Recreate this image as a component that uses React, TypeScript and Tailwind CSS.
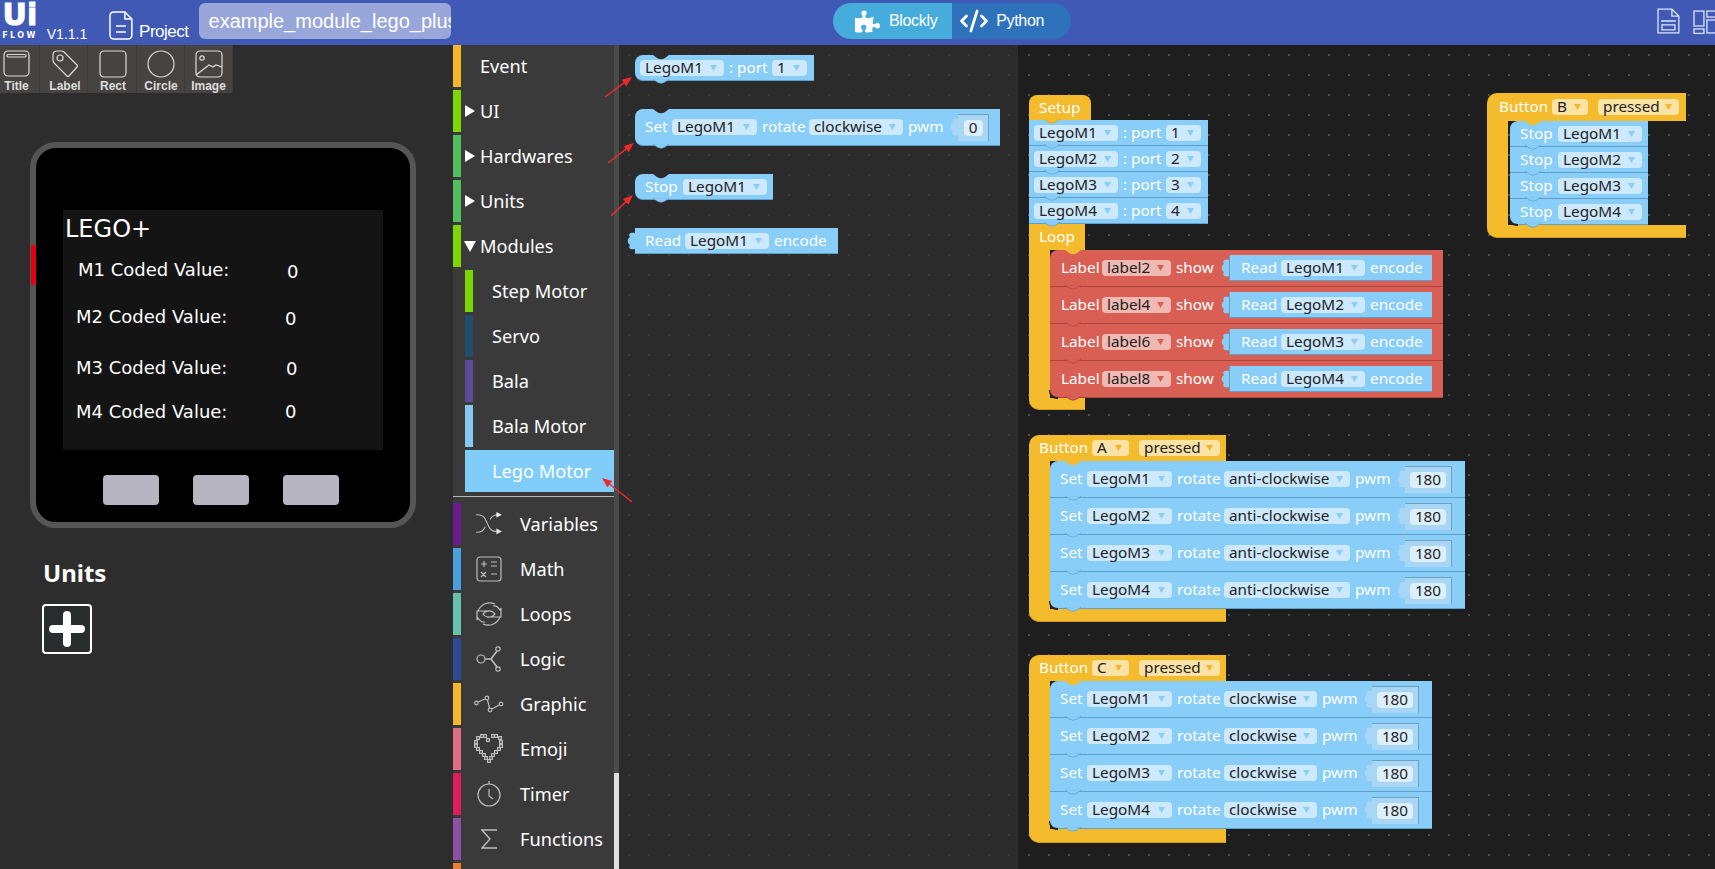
import React from 'react';
import { CodeXml } from 'lucide-react';
import { FaPuzzlePiece } from 'react-icons/fa';

type Tone = 'blue' | 'red' | 'yellow';

const toneStyles: Record<Tone, { body: string; pill: string; tri: string; fill: string; edge: string }> = {
  blue: { body: 'bg-[#89cdf9] border-[#5f9fca]', pill: 'bg-[#cde9fe]', tri: 'text-[#89cdf9]', fill: '#89cdf9', edge: '#5f9fca' },
  red: { body: 'bg-[#d95f54] border-[#a8463e]', pill: 'bg-[#f0b9b3]', tri: 'text-[#d95f54]', fill: '#d95f54', edge: '#a8463e' },
  yellow: { body: 'bg-[#f4bb2c] border-[#d29c1c]', pill: 'bg-[#fbe2a5]', tri: 'text-[#f4b52b]', fill: '#f4bb2c', edge: '#d29c1c' },
};

const Pill = ({ text, w, tone = 'blue' }: { text: string; w: string; tone?: Tone }) => (
  <span className={`flex h-[16px] shrink-0 items-center justify-between rounded-[4px] pl-[5px] pr-[7px] text-[15.3px] leading-none text-[#222] ${w} ${toneStyles[tone].pill}`}>
    <span>{text}</span>
    <svg width="7" height="6" viewBox="0 0 7 6" className={toneStyles[tone].tri}>
      <path d="M0 0h7L3.5 6z" fill="currentColor" />
    </svg>
  </span>
);

const Txt = ({ children, w }: { children: React.ReactNode; w: string }) => (
  <span className={`shrink-0 whitespace-nowrap text-[15.3px] leading-none text-white ${w}`}>{children}</span>
);

const Tab = ({ color, edge }: { color: string; edge?: string }) => (
  <svg width="8" height="18" viewBox="0 0 8 18" className="shrink-0">
    <path d="M8 1C3 0 1 2 3 5 0 7 0 11 3 13 1 16 3 18 8 17z" fill={color} stroke={edge ?? 'none'} strokeWidth="0.6" />
  </svg>
);

// the little puzzle edges at the top and bottom of a statement block
const Notch = ({ tone, hole, left = 'left-[15px]' }: { tone: Tone; hole?: string; left?: string }) => (
  <>
    {hole && (
      <svg width="16" height="5" viewBox="0 0 16 5" className={`absolute top-0 ${left}`}>
        <path d="M0 0l4 3q4 2.5 8 0l4-3z" fill={hole} />
      </svg>
    )}
    <svg width="16" height="6" viewBox="0 0 16 6" className={`absolute -bottom-[5px] z-10 ${left}`}>
      <path d="M0 0l4 3q4 2.5 8 0l4-3z" fill={toneStyles[tone].fill} stroke={toneStyles[tone].edge} strokeWidth="0.7" />
      <path d="M1 0h14" stroke={toneStyles[tone].fill} strokeWidth="1.5" />
    </svg>
  </>
);

const Block = ({
  tone = 'blue',
  hole,
  className,
  children,
  last,
  left,
}: {
  tone?: Tone;
  hole?: string;
  className: string;
  children: React.ReactNode;
  last?: boolean;
  left?: string;
}) => (
  <div className={`relative box-border flex shrink-0 items-center border-b ${toneStyles[tone].body} ${className}`}>
    {children}
    <Notch tone={tone} hole={hole} left={left} />
    {last && <div className="absolute bottom-[-2px] left-[-1px] h-[9px] w-[9px] rounded-bl-[8px] border-b-2 border-l border-[#222]" />}
  </div>
);

const Socket = ({ value, pill, socket }: { value: string; pill: string; socket: string }) => (
  <span className="flex shrink-0 items-center">
    <Tab color="#a9d6f4" />
    <span className={`flex h-[27px] items-center justify-center border-r border-t border-[#6d9fbf] bg-[#a9d6f4] ${socket}`}>
      <span className={`flex h-[16px] items-center justify-center rounded-[4px] bg-[#dceffd] text-[15.3px] leading-none text-[#222] ${pill}`}>{value}</span>
    </span>
  </span>
);

const ReadBlock = ({ motor }: { motor: string }) => (
  <span className="flex shrink-0 items-center">
    <Tab color="#89cdf9" />
    <span className="box-border flex h-[26px] w-[203px] items-center gap-[5px] border-b border-l border-[#5f9fca] bg-[#89cdf9] pl-[11px]">
      <Txt w="w-[35px]">Read</Txt>
      <Pill text={motor} w="w-[84px]" />
      <Txt w="w-[52px]">encode</Txt>
    </span>
  </span>
);

const SetRow = ({ motor, dir, pillW, rowW, first, last }: { motor: string; dir: string; pillW: string; rowW: string; first?: boolean; last?: boolean }) => (
  <Block hole={first ? '#f4bb2c' : undefined} className={`h-[37px] pl-[10px] ${rowW} ${first ? 'rounded-tl-[8px]' : ''} ${last ? 'rounded-bl-[8px]' : ''}`} last={last}>
    <span className="flex items-center gap-[5px]">
      <Txt w="w-[22px]">Set</Txt>
      <Pill text={motor} w="w-[85px]" />
      <Txt w="w-[42px]">rotate</Txt>
      <Pill text={dir} w={pillW} />
      <Txt w="w-[34px]">pwm</Txt>
    </span>
    <span className="ml-[8px]">
      <Socket value="180" pill="w-[36px]" socket="w-[47px]" />
    </span>
  </Block>
);

const CBlock = ({ header, bottomW, bottomH, className, children }: { header: React.ReactNode; bottomW: string; bottomH: string; className?: string; children: React.ReactNode }) => (
  <div className={`flex flex-col ${className ?? ''}`}>
    {header}
    <div className="flex">
      <div className="w-[21px] bg-[#f4bb2c]" />
      <div className="flex flex-col">{children}</div>
    </div>
    <div className={`rounded-bl-[10px] border-b border-[#d29c1c] bg-[#f4bb2c] ${bottomW} ${bottomH}`} />
  </div>
);

const ButtonHeader = ({ letter, pad }: { letter: string; pad: string }) => (
  <div className={`flex h-[26px] w-[197px] items-center rounded-tl-[10px] bg-[#f4bb2c] ${pad}`}>
    <Txt w="w-[48px]">Button</Txt>
    <span className="ml-[5px]"><Pill text={letter} tone="yellow" w="w-[37px]" /></span>
    <span className="ml-[10px]"><Pill text="pressed" tone="yellow" w="w-[81px]" /></span>
  </div>
);

const PortRow = ({ motor, port, hole, className, notchLeft }: { motor: string; port: string; hole?: string; className?: string; notchLeft?: string }) => (
  <Block hole={hole} left={notchLeft} className={`h-[26px] w-[179px] gap-[5px] pl-[5px] ${className ?? ''}`}>
    <Pill text={motor} w="w-[84px]" />
    <Txt w="w-[38px]">: port</Txt>
    <Pill text={port} w="w-[35px]" />
  </Block>
);

const LabelRow = ({ label, motor, first, last }: { label: string; motor: string; first?: boolean; last?: boolean }) => (
  <Block tone="red" hole={first ? '#f4bb2c' : undefined} last={last} className={`h-[37px] w-[393px] pl-[11px] ${first ? 'rounded-tl-[8px]' : ''} ${last ? 'rounded-bl-[8px]' : ''}`}>
    <span className="flex items-center gap-[5px]">
      <Txt w="w-[36px]">Label</Txt>
      <Pill text={label} tone="red" w="w-[69px]" />
      <Txt w="w-[36px]">show</Txt>
    </span>
    <span className="ml-[9px]">
      <ReadBlock motor={motor} />
    </span>
  </Block>
);

const motors = ['LegoM1', 'LegoM2', 'LegoM3', 'LegoM4'];

const Bar = ({ c }: { c: string }) => <span className={`block h-[42px] shrink-0 ${c}`} />;

const Disclosure = ({ open }: { open?: boolean }) => (
  <svg width="12" height="14" viewBox="0 0 12 14" className="absolute left-[11px]">
    <path d={open ? 'M0 2h12L6 13z' : 'M1 1l10 6-10 6z'} fill="#fff" />
  </svg>
);

const ico = { fill: 'none', stroke: '#bdbdbd', strokeWidth: 1.2 };

const icons: Record<string, React.ReactNode> = {
  Variables: (
    <svg width="28" height="24" viewBox="0 0 30 26" {...ico}>
      <path d="M1 3c6 0 9 1 12 9s6 9 10 9M1 22c6 0 8-2 10-6M16 8c2-3 4-5 8-5" />
      <path d="M23 0l6 3-6 3zM23 18l6 3-6 3z" fill="#eee" stroke="none" />
    </svg>
  ),
  Math: (
    <svg width="26" height="26" viewBox="0 0 26 26" {...ico}>
      <rect x="1" y="1" width="24" height="24" rx="3" />
      <path d="M5 8h6M8 5v6M15 6h6M15 10h6M5 16l5 5M10 16l-5 5M15 18h6" />
    </svg>
  ),
  Loops: (
    <svg width="28" height="26" viewBox="0 0 28 26" {...ico}>
      <path d="M3 10C6 3 13 0 20 3M18 5c3-1 5 1 7 4l1-2v9h-9l3-3c-2-3-6-4-10-2" />
      <path d="M25 16c-3 7-10 10-17 7M10 21c-3 1-5-1-7-4l-1 2v-9h9l-3 3c2 3 6 4 10 2" />
    </svg>
  ),
  Logic: (
    <svg width="26" height="26" viewBox="0 0 26 26" {...ico}>
      <circle cx="5" cy="13" r="4" />
      <circle cx="22" cy="3" r="2.2" />
      <circle cx="22" cy="23" r="2.2" />
      <path d="M9 13h6M15 13l6-8M15 13l6 8" strokeWidth="1.6" />
    </svg>
  ),
  Graphic: (
    <svg width="30" height="18" viewBox="0 0 30 18" {...ico}>
      <circle cx="2.5" cy="8" r="1.8" />
      <circle cx="13" cy="3" r="1.8" />
      <circle cx="16" cy="15" r="1.8" />
      <circle cx="27" cy="9" r="1.8" />
      <path d="M4 7l7-3M13.5 5l2 8M18 14l7-4" />
    </svg>
  ),
  Emoji: (
    <svg width="30" height="30" viewBox="0 0 30 30" {...ico}>
      {[[8,2],[11,2],[14,6],[19,2],[22,2],[26,4],[27,8],[27,12],[25,15],[22,18],[19,21],[17,24],[15,27],[12,24],[10,21],[7,18],[4,15],[2,12],[2,8],[4,4]].map(([x, y]) => (
        <rect key={`${x}-${y}`} x={x - 1.4} y={y - 1.4} width="2.8" height="2.8" />
      ))}
    </svg>
  ),
  Timer: (
    <svg width="24" height="26" viewBox="0 0 24 26" {...ico}>
      <circle cx="12" cy="14" r="11" />
      <path d="M12 0v3M12 8v7l4 3" />
    </svg>
  ),
  Functions: (
    <svg width="17" height="20" viewBox="0 0 17 20" {...ico} strokeWidth={1.4}>
      <path d="M16 1H1l8 9-8 9h15" />
    </svg>
  ),
};

const subItems = [
  { name: 'Step Motor', c: 'bg-[#7ed600]' },
  { name: 'Servo', c: 'bg-[#1f4e6e]' },
  { name: 'Bala', c: 'bg-[#5e4b9b]' },
  { name: 'Bala Motor', c: 'bg-[#85c9f5]' },
];

const lower = [
  { name: 'Variables', c: 'bg-[#6a1b8a]' },
  { name: 'Math', c: 'bg-[#4a9fdc]' },
  { name: 'Loops', c: 'bg-[#66c2ad]' },
  { name: 'Logic', c: 'bg-[#2e4a94]' },
  { name: 'Graphic', c: 'bg-[#f5b630]' },
  { name: 'Emoji', c: 'bg-[#df6e85]' },
  { name: 'Timer', c: 'bg-[#dd1d5f]' },
  { name: 'Functions', c: 'bg-[#8a52a5]' },
];

const Toolbox = () => (
  <div className="flex w-[161px] shrink-0 flex-col gap-[3px] overflow-hidden bg-[#3a3a3a] font-['Noto_Sans',sans-serif] text-[18.2px] leading-none text-white">
    {[
      { name: 'Event', c: 'bg-[#f5b52b]' },
      { name: 'UI', c: 'bg-[#7ed600]', arrow: 'closed' },
      { name: 'Hardwares', c: 'bg-[#52bd5f]', arrow: 'closed' },
      { name: 'Units', c: 'bg-[#52bd5f]', arrow: 'closed' },
      { name: 'Modules', c: 'bg-[#7ed600]', arrow: 'open' },
    ].map((it) => (
      <div key={it.name} className="relative flex h-[42px] shrink-0 items-center">
        <Bar c={`w-[8px] ${it.c}`} />
        {it.arrow && <Disclosure open={it.arrow === 'open'} />}
        <span className="ml-[19px]">{it.name}</span>
      </div>
    ))}
    {subItems.map((it) => (
      <div key={it.name} className="flex h-[42px] shrink-0 items-center pl-[12px]">
        <Bar c={`w-[8px] ${it.c}`} />
        <span className="ml-[19px]">{it.name}</span>
      </div>
    ))}
    <div className="ml-[12px] flex h-[42px] shrink-0 items-center bg-[#81cdf9] pl-[27px]">Lego Motor</div>
    <div className="mb-[3px] mt-[1px] h-px w-full shrink-0 bg-[#b5b5b5]" />
    {lower.map((it) => (
      <div key={it.name} className="flex h-[42px] shrink-0 items-center">
        <Bar c={`w-[8px] ${it.c}`} />
        <span className="flex w-[59px] shrink-0 items-center justify-center pr-[3px]">{icons[it.name]}</span>
        <span>{it.name}</span>
      </div>
    ))}
    <Bar c="w-[8px] bg-[#e67e35]" />
  </div>
);

const toolIcons = {
  Title: (
    <svg width="28" height="28" viewBox="0 0 28 28" fill="none" stroke="#ddd" strokeWidth="1.2">
      <rect x="1" y="1" width="25" height="25" rx="4" />
      <rect x="4" y="4.5" width="19" height="2.5" rx="1.2" />
    </svg>
  ),
  Label: (
    <svg width="28" height="28" viewBox="0 0 28 28" fill="none" stroke="#ddd" strokeWidth="1.2">
      <path d="M2 5q0-4 4-4h4q2 0 3 1l13 13q1 1 0 2l-8 9q-1 1-2 0L3 13q-1-2-1-3z" />
      <circle cx="9" cy="8" r="3" />
    </svg>
  ),
  Rect: (
    <svg width="28" height="28" viewBox="0 0 28 28" fill="none" stroke="#ddd" strokeWidth="1.2">
      <rect x="1" y="1" width="26" height="26" rx="4" />
    </svg>
  ),
  Circle: (
    <svg width="28" height="28" viewBox="0 0 28 28" fill="none" stroke="#ddd" strokeWidth="1.2">
      <circle cx="14" cy="14" r="13" />
    </svg>
  ),
  Image: (
    <svg width="28" height="28" viewBox="0 0 28 28" fill="none" stroke="#ddd" strokeWidth="1.2">
      <rect x="1" y="1" width="26" height="26" rx="4" />
      <circle cx="7" cy="8" r="2.2" />
      <path d="M1 25l13-10 4 2 3-2 6 2" />
    </svg>
  ),
};

const tools: { name: keyof typeof toolIcons; w: string }[] = [
  { name: 'Title', w: 'w-[40px] pr-[6px]' },
  { name: 'Label', w: 'w-[48px] pl-[3px]' },
  { name: 'Rect', w: 'w-[49px] pl-[2px]' },
  { name: 'Circle', w: 'w-[48px] pl-[1px]' },
  { name: 'Image', w: 'w-[48px]' },
];

const Device = () => (
  <div className="relative ml-[30px] mt-[49px] box-border flex h-[386px] w-[386px] flex-col items-center rounded-[26px] border-[6px] border-[#555] bg-black">
    <div className="absolute left-[-5px] top-[97px] h-[40px] w-[5px] rounded-[1px] bg-[#e60012]" />
    <div className="relative mt-[62px] h-[240px] w-[320px] bg-[#141414] font-['DejaVu_Sans',sans-serif] text-white">
      <span className="absolute left-[2px] top-[5px] text-[24px] leading-[28px]">LEGO+</span>
      {[
        { t: 'M1 Coded Value:', x: 'left-[15px]', y: 'top-[50px]', vx: 'left-[224px]', vy: 'top-[52px]' },
        { t: 'M2 Coded Value:', x: 'left-[13px]', y: 'top-[97px]', vx: 'left-[222px]', vy: 'top-[99px]' },
        { t: 'M3 Coded Value:', x: 'left-[13px]', y: 'top-[148px]', vx: 'left-[223px]', vy: 'top-[149px]' },
        { t: 'M4 Coded Value:', x: 'left-[13px]', y: 'top-[192px]', vx: 'left-[222px]', vy: 'top-[192px]' },
      ].map((r) => (
        <React.Fragment key={r.t}>
          <span className={`absolute whitespace-nowrap text-[18px] leading-[20px] ${r.x} ${r.y}`}>{r.t}</span>
          <span className={`absolute text-[18px] leading-[20px] ${r.vx} ${r.vy}`}>0</span>
        </React.Fragment>
      ))}
    </div>
    <div className="mr-[4px] mt-[25px] flex gap-[34px]">
      {[0, 1, 2].map((i) => (
        <div key={i} className="h-[30px] w-[56px] rounded-[4px] bg-[#b8b5c3]" />
      ))}
    </div>
  </div>
);

const Arrow = ({ x1, y1, x2, y2 }: { x1: number; y1: number; x2: number; y2: number }) => {
  const a = Math.atan2(y2 - y1, x2 - x1);
  const p = (len: number, off: number) => `${x2 - len * Math.cos(a) + off * Math.sin(a)},${y2 - len * Math.sin(a) - off * Math.cos(a)}`;
  return (
    <g>
      <line x1={x1} y1={y1} x2={x2 - 6 * Math.cos(a)} y2={y2 - 6 * Math.sin(a)} stroke="#ee2b2b" strokeWidth="1.5" />
      <polygon points={`${x2},${y2} ${p(10, 4)} ${p(10, -4)}`} fill="#ee2b2b" />
    </g>
  );
};

export default function App() {
  return (
    <div className="relative flex h-[869px] w-[1715px] flex-col overflow-hidden bg-[#2d2d2d] font-['Noto_Sans',sans-serif]">
      <header className="flex h-[45px] shrink-0 items-start bg-[#3f59b5] font-['Liberation_Sans',sans-serif] text-white">
        <div className="ml-[2px] flex w-[36px] flex-col items-center font-['DejaVu_Sans',sans-serif] font-bold">
          <span className="h-[30px] text-[30px] leading-[30px] [-webkit-text-stroke:1px_white]">Ui</span>
          <span className="mt-[1px] h-[10px] text-[8px] leading-[10px] tracking-[2.4px]">FLOW</span>
        </div>
        <span className="ml-[9px] mt-[27px] text-[14px] leading-[14px]">V1.1.1</span>
        <svg width="24" height="29" viewBox="0 0 24 29" fill="none" stroke="#fff" strokeWidth="1.5" className="ml-[22px] mt-[11px]">
          <path d="M5 1h11l7 7v16q0 4-4 4H5q-4 0-4-4V5q0-4 4-4zM16 1v7h7M7 15h10M7 21h10" />
        </svg>
        <span className="ml-[6px] mt-[23px] text-[17px] leading-[18px] tracking-[-0.5px]">Project</span>
        <div className="ml-[10px] mt-[3px] flex h-[36px] w-[254px] items-center overflow-hidden rounded-[6px] bg-[#98a6d9] pl-[10px] text-[20px] whitespace-nowrap">
          example_module_lego_plus
        </div>
        <div className="ml-[382px] mt-[3px] flex h-[36px] w-[240px] overflow-hidden rounded-[18px] text-[16px]">
          <div className="flex w-[120px] items-center bg-[#46acdc] pl-[22px] tracking-[-0.3px]">
            <FaPuzzlePiece size={25} />
            <span className="ml-[9px]">Blockly</span>
          </div>
          <div className="flex w-[120px] items-center bg-[#2f72bc] pl-[7px] tracking-[-0.3px]">
            <CodeXml size={30} strokeWidth={2.2} />
            <span className="ml-[7px]">Python</span>
          </div>
        </div>
        <svg width="23" height="26" viewBox="0 0 23 26" fill="none" stroke="#dfe4f5" strokeWidth="1.3" className="ml-[586px] mt-[8px]">
          <path d="M1 1h14l7 7v17H1zM15 1v7h7M4 13h15M5 17h13v5H5z" />
        </svg>
        <svg width="22" height="24" viewBox="0 0 22 24" fill="none" stroke="#dfe4f5" strokeWidth="1.3" className="ml-[13px] mt-[10px]">
          <rect x="1" y="1" width="10" height="15" />
          <rect x="1" y="19" width="10" height="4.5" />
          <rect x="14" y="1" width="10" height="6" />
          <rect x="14" y="10" width="10" height="13" />
        </svg>
      </header>

      <main className="flex min-h-0 flex-1">
        <aside className="w-[453px] shrink-0 bg-[#2d2d2d]">
          <div className="flex h-[48px] w-[233px] font-['Liberation_Sans',sans-serif] text-[12px] font-bold leading-none text-[#ddd]">
            {tools.map((t) => (
              <div key={t.name} className={`flex flex-col items-center border-r border-[#3d3a38] bg-[#474341] pt-[5px] ${t.w}`}>
                {toolIcons[t.name]}
                <span className="mt-[2px]">{t.name}</span>
              </div>
            ))}
          </div>
          <Device />
          <h2 className="ml-[43px] mt-[30px] text-[24px] font-bold leading-[30px] text-white">Units</h2>
          <button className="ml-[42px] mt-[16px] flex h-[50px] w-[50px] items-center justify-center rounded-[4px] border-2 border-white bg-[#2a2d2d]">
            <svg width="38" height="38" viewBox="0 0 38 38">
              <path d="M19 5v28M5 19h28" stroke="#fff" strokeWidth="8" strokeLinecap="round" />
            </svg>
          </button>
        </aside>

        <Toolbox />
        <div className="relative h-full w-[5px] shrink-0 bg-[#4a4a4a]">
          <div className="absolute bottom-0 h-[96px] w-full bg-[#e0e0e0]" />
        </div>

        <section className="flex w-[399px] shrink-0 flex-col rounded-tr-[12px] bg-[#2b2b2b] bg-[radial-gradient(#3a3a3a_1px,transparent_1px)] bg-[size:20px_20px] pl-[16px] pt-[10px]">
          <PortRow motor="LegoM1" port="1" hole="#2b2b2b" notchLeft="left-[18px]" className="rounded-l-[8px]" />
          <Block hole="#2b2b2b" left="left-[18px]" className="mt-[28px] h-[37px] w-[365px] rounded-l-[8px] pl-[10px]">
            <span className="flex items-center gap-[5px]">
              <Txt w="w-[22px]">Set</Txt>
              <Pill text="LegoM1" w="w-[85px]" />
              <Txt w="w-[42px]">rotate</Txt>
              <Pill text="clockwise" w="w-[94px]" />
              <Txt w="w-[35px]">pwm</Txt>
            </span>
            <span className="ml-[7px]">
              <Socket value="0" pill="w-[19px]" socket="w-[31px]" />
            </span>
          </Block>
          <Block hole="#2b2b2b" left="left-[18px]" className="mt-[28px] h-[26px] w-[138px] gap-[6px] rounded-l-[8px] pl-[10px]">
            <Txt w="w-[32px]">Stop</Txt>
            <Pill text="LegoM1" w="w-[84px]" />
          </Block>
          <div className="ml-[-8px] mt-[28px] flex items-center">
            <Tab color="#89cdf9" />
            <span className="box-border flex h-[26px] w-[203px] items-center gap-[5px] border-b border-[#5f9fca] bg-[#89cdf9] pl-[10px]">
              <Txt w="w-[35px]">Read</Txt>
              <Pill text="LegoM1" w="w-[84px]" />
              <Txt w="w-[52px]">encode</Txt>
            </span>
          </div>
        </section>

        <section className="relative flex-1 bg-[#1e1e1e] bg-[radial-gradient(#4d4d4d_1px,transparent_1px)] bg-[size:20px_20px] bg-[position:1px_0px]">
          {/* blocks sit on the free canvas of the workspace */}
          <div className="absolute left-[11px] top-[50px] flex flex-col">
            <div className="relative flex h-[25px] w-[62px] items-center rounded-t-[8px] bg-[#f4bb2c] pl-[10px]">
              <Txt w="w-[42px]">Setup</Txt>
              <Notch tone="yellow" />
            </div>
            {motors.map((m, i) => (
              <PortRow key={m} motor={m} port={String(i + 1)} />
            ))}
            <CBlock
              bottomW="w-[56px]"
              bottomH="h-[12px]"
              header={
                <div className="flex h-[26px] w-[56px] items-center bg-[#f4bb2c] pl-[10px]">
                  <Txt w="w-[36px]">Loop</Txt>
                </div>
              }
            >
              {motors.map((m, i) => (
                <LabelRow key={m} label={`label${(i + 1) * 2}`} motor={m} first={i === 0} last={i === 3} />
              ))}
            </CBlock>
          </div>

          <CBlock className="absolute left-[11px] top-[390px]" bottomW="w-[197px]" bottomH="h-[13px]" header={<ButtonHeader letter="A" pad="pl-[10px]" />}>
            {motors.map((m, i) => (
              <SetRow key={m} motor={m} dir="anti-clockwise" pillW="w-[126px]" rowW="w-[415px]" first={i === 0} last={i === 3} />
            ))}
          </CBlock>

          <CBlock className="absolute left-[11px] top-[610px]" bottomW="w-[197px]" bottomH="h-[14px]" header={<ButtonHeader letter="C" pad="pl-[10px]" />}>
            {motors.map((m, i) => (
              <SetRow key={m} motor={m} dir="clockwise" pillW="w-[93px]" rowW="w-[382px]" first={i === 0} last={i === 3} />
            ))}
          </CBlock>

          <CBlock
            className="absolute left-[469px] top-[48px]"
            bottomW="w-[199px]"
            bottomH="h-[13px]"
            header={
              <div className="flex h-[28px] w-[199px] items-center rounded-tl-[10px] bg-[#f4bb2c] pl-[12px]">
                <Txt w="w-[47px]">Button</Txt>
                <span className="ml-[6px]"><Pill text="B" tone="yellow" w="w-[36px]" /></span>
                <span className="ml-[10px]"><Pill text="pressed" tone="yellow" w="w-[81px]" /></span>
              </div>
            }
          >
            {motors.map((m, i) => (
              <Block key={m} hole={i === 0 ? '#f4bb2c' : undefined} last={i === 3} className={`ml-[2px] h-[26px] w-[138px] gap-[6px] pl-[10px] ${i === 0 ? 'rounded-tl-[8px]' : ''} ${i === 3 ? 'rounded-bl-[8px]' : ''}`}>
                <Txt w="w-[32px]">Stop</Txt>
                <Pill text={m} w="w-[84px]" />
              </Block>
            ))}
          </CBlock>
        </section>
      </main>

      {/* red annotation arrows on top of the screenshot */}
      <svg width="1715" height="869" className="pointer-events-none absolute left-0 top-0">
        <Arrow x1={605} y1={97} x2={632} y2={77} />
        <Arrow x1={608} y1={163} x2={634} y2={143} />
        <Arrow x1={611} y1={216} x2={633} y2={195} />
        <Arrow x1={632} y1={502} x2={602} y2={478} />
      </svg>
    </div>
  );
}
